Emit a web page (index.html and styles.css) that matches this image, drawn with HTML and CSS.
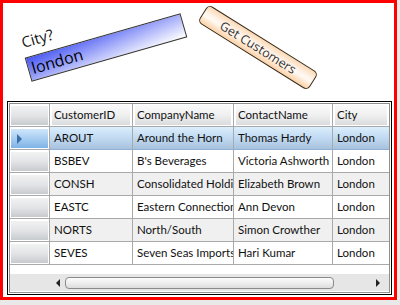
FILE: index.html
```html
<!DOCTYPE html>
<html>
<head>
<meta charset="utf-8">
<link rel="stylesheet" href="styles.css">
</head>
<body>
<div class="frame">
  <div class="canvas">
    <span class="label">City?</span>
    <div class="textbox">london</div>
    <div class="btn">Get Customers</div>
  </div>
  <div class="grid">
    <div class="grid-inner">
      <div class="row head">
        <div class="rh"><span></span></div>
        <div class="hc"><span>CustomerID</span></div>
        <div class="hc"><span>CompanyName</span></div>
        <div class="hc"><span>ContactName</span></div>
        <div class="hc last"><span>City</span></div>
      </div>
      <div class="row sel alt">
        <div class="rh"><span><i class="arrow"></i></span></div>
        <div class="c">AROUT</div><div class="c">Around the Horn</div><div class="c">Thomas Hardy</div><div class="c last">London</div>
      </div>
      <div class="row">
        <div class="rh"><span></span></div>
        <div class="c">BSBEV</div><div class="c">B's Beverages</div><div class="c">Victoria Ashworth</div><div class="c last">London</div>
      </div>
      <div class="row alt">
        <div class="rh"><span></span></div>
        <div class="c">CONSH</div><div class="c">Consolidated Holdings</div><div class="c">Elizabeth Brown</div><div class="c last">London</div>
      </div>
      <div class="row">
        <div class="rh"><span></span></div>
        <div class="c">EASTC</div><div class="c">Eastern Connection</div><div class="c">Ann Devon</div><div class="c last">London</div>
      </div>
      <div class="row alt">
        <div class="rh"><span></span></div>
        <div class="c">NORTS</div><div class="c">North/South</div><div class="c">Simon Crowther</div><div class="c last">London</div>
      </div>
      <div class="row">
        <div class="rh"><span></span></div>
        <div class="c">SEVES</div><div class="c">Seven Seas Imports</div><div class="c">Hari Kumar</div><div class="c last">London</div>
      </div>
      <div class="gap"></div>
      <div class="hscroll">
        <div class="sb-left"></div>
        <div class="track">
          <div class="sb-arrow left"></div>
          <div class="thumb"></div>
          <div class="sb-arrow right"></div>
        </div>
      </div>
    </div>
  </div>
</div>
</body>
</html>
```
FILE: styles.css
```css
html, body {
  margin: 0;
  padding: 0;
}
body {
  background: #e9e9e9;
  width: 400px;
  height: 305px;
  font-family: "Open Sans", "DejaVu Sans", sans-serif;
}
.frame {
  box-sizing: border-box;
  width: 397px;
  height: 300px;
  border: 3px solid #ff0000;
  background: #fff;
  padding: 0 2px 2px 4px;
  display: flex;
  flex-direction: column;
}
.canvas {
  position: relative;
  height: 98px;
  flex: none;
}
.label {
  position: absolute;
  left: 17px;
  top: 30px;
  font-size: 15px;
  line-height: 18px;
  color: #111;
  transform: rotate(-16deg);
  transform-origin: left bottom;
}
.textbox {
  position: absolute;
  left: 18px;
  top: 32px;
  width: 162px;
  height: 25px;
  box-sizing: border-box;
  border: 1px solid #333;
  background: linear-gradient(to bottom right, #4656f4 0%, #a4acf9 50%, #ffffff 100%);
  font-size: 16px;
  line-height: 22px;
  padding-left: 3px;
  color: #000;
  transform: rotate(-16deg);
}
.btn {
  position: absolute;
  left: 186px;
  top: 34px;
  width: 130px;
  height: 21px;
  box-sizing: border-box;
  border: 1px solid #3b2a12;
  border-radius: 5px;
  background: linear-gradient(to bottom, #fcd9b6 0%, #fff4ea 40%, #fffaf5 55%, #fbd1a6 100%);
  font-size: 12.5px;
  line-height: 19px;
  text-align: center;
  color: #333;
  transform: rotate(32deg);
}
.grid {
  flex: 1;
  border: 1px solid #000;
  padding: 1px;
  background: #fff;
  display: flex;
}
.grid-inner {
  flex: 1;
  border: 1px solid #8e8e8e;
  display: flex;
  flex-direction: column;
  font-family: "Lato", "Open Sans", sans-serif;
  font-size: 11.5px;
  color: #111;
}
.row {
  display: grid;
  grid-template-columns: 40px 83px 101px 99px 1fr;
  height: 23px;
  flex: none;
}
.row > div {
  box-sizing: border-box;
  border-right: 1px solid #a9a9a9;
  border-bottom: 1px solid #a9a9a9;
  overflow: hidden;
  white-space: nowrap;
}
.row > div.last {
  border-right: none;
}
.row.alt .c {
  background: #f0f0f0;
}
.c {
  padding-left: 4px;
  line-height: 22px;
}
.rh {
  padding: 2px 1px 1px 1px;
  background: #fff;
  display: flex;
}
.rh span {
  flex: 1;
  background: linear-gradient(to bottom, #f2f2f2 0%, #e2e4e6 50%, #c8cbce 100%);
  display: flex;
  align-items: center;
}
.hc {
  padding: 1px 2px 1px 2px;
  background: #fff;
  display: flex;
}
.hc span {
  flex: 1;
  background: linear-gradient(to bottom, #fafafa 0%, #f0f0f0 50%, #d9dbdd 100%);
  padding-left: 2px;
  line-height: 20px;
}
.row.sel .c {
  background: linear-gradient(to bottom, #dbeefc 0%, #c3dcf3 45%, #a8c2de 100%);
  border-bottom-color: #8fb0d4;
}
.row.sel .rh span {
  background: linear-gradient(to bottom, #cfe6fb 0%, #a7cdf1 50%, #7fb3e6 100%);
}
.arrow {
  width: 0;
  height: 0;
  margin-left: 6px;
  border-top: 5px solid transparent;
  border-bottom: 5px solid transparent;
  border-left: 5px solid #3a6fa8;
}
.gap {
  height: 9px;
  flex: none;
}
.hscroll {
  height: 17px;
  flex: none;
  display: grid;
  grid-template-columns: 40px 1fr;
  background: #e6e6e6;
}
.track {
  display: flex;
  align-items: center;
  padding: 0 6px 0 6px;
  gap: 5px;
}
.sb-arrow {
  width: 0;
  height: 0;
  border-top: 4px solid transparent;
  border-bottom: 4px solid transparent;
}
.sb-arrow.left {
  border-right: 4px solid #222;
}
.sb-arrow.right {
  border-left: 4px solid #222;
  margin-left: 37px;
}
.thumb {
  width: 269px;
  height: 12px;
  box-sizing: border-box;
  border: 1px solid #8a8a8a;
  border-radius: 4px;
  background: linear-gradient(to bottom, #fbfbfb 0%, #eeeeee 50%, #dcdcdc 100%);
}
```
